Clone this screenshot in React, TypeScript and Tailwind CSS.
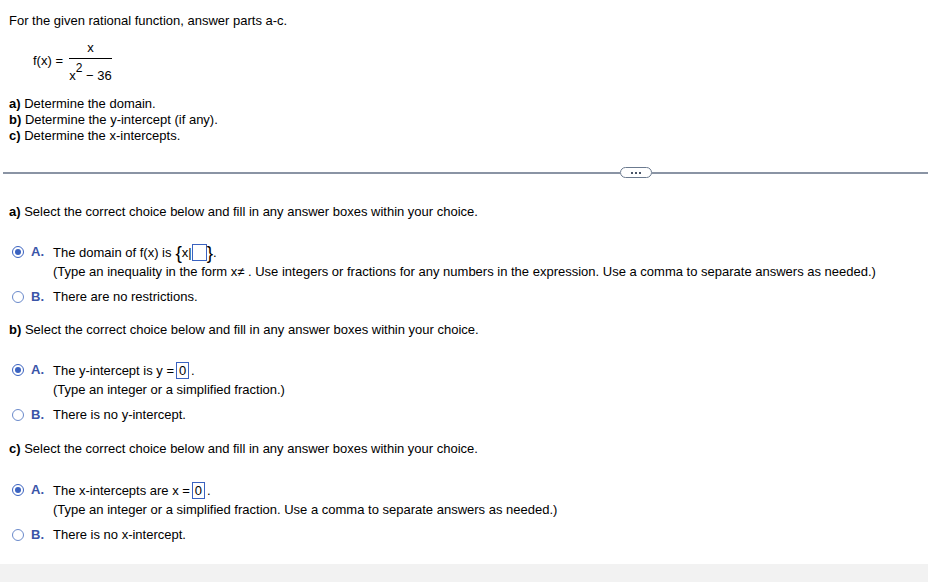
import React from 'react';

const font = { fontFamily: '"Liberation Sans", Arial, sans-serif' };

const Radio: React.FC<{ checked?: boolean }> = ({ checked }) => (
  <span
    className={`mt-[2px] flex h-[12px] w-[12px] shrink-0 items-center justify-center rounded-full border ${
      checked ? 'border-[#3a62c0]' : 'border-[#6a8acb]'
    } bg-white`}
  >
    {checked && <span className="h-[6px] w-[6px] rounded-full bg-[#3a62c0]" />}
  </span>
);

interface ChoiceProps {
  letter: string;
  checked?: boolean;
  children: React.ReactNode;
  hint?: string;
}

const Choice: React.FC<ChoiceProps> = ({ letter, checked, children, hint }) => (
  <div className="flex items-start">
    <div className="ml-[3px] flex w-[41px] items-start gap-[7px]">
      <Radio checked={checked} />
      <span className="font-bold text-[#3b55a8]">{letter}</span>
    </div>
    <div>
      <div className="flex items-center">{children}</div>
      {hint && <div className="mt-[3px]">{hint}</div>}
    </div>
  </div>
);

const AnswerBox: React.FC<{ value?: string }> = ({ value }) => (
  <span className="mx-[2px] inline-flex h-[17px] min-w-[13px] items-center justify-center border border-[#3a62c0] px-[1px] leading-none">
    {value}
  </span>
);

const SectionHeader: React.FC<{ label: string }> = ({ label }) => (
  <div>
    <span className="font-bold">{label}</span> Select the correct choice below and fill in any answer boxes within your choice.
  </div>
);

export default function App() {
  return (
    <div className="flex min-h-[582px] flex-col bg-white text-[13px] leading-4 text-black" style={font}>
      <div className="flex-1">
        <div className="px-[9px] pt-[13px]">For the given rational function, answer parts a-c.</div>

        <div className="mt-[11px] flex items-start pl-[33px]">
          <span className="mt-[13px]">f(x) =</span>
          <div className="ml-[6px] flex flex-col items-center">
            <span className="pb-[2px]">x</span>
            <span className="w-[43px] border-t border-black" />
            <span className="pt-[9px]">
              x<span className="relative -top-[8px] text-[12px]">2</span> − 36
            </span>
          </div>
        </div>

        <div className="mt-[12px] px-[9px]">
          <div><span className="font-bold">a)</span> Determine the domain.</div>
          <div><span className="font-bold">b)</span> Determine the y-intercept (if any).</div>
          <div><span className="font-bold">c)</span> Determine the x-intercepts.</div>
        </div>

        <div className="mt-[23px] flex items-center pl-[3px]">
          <div className="h-[2px] flex-1 bg-[#8a94a4]" />
          <div className="flex h-[11px] w-[32px] items-center justify-center gap-[2px] rounded-full border border-[#6b7a8f] bg-white">
            <span className="h-[2px] w-[2px] bg-[#4a5568]" />
            <span className="h-[2px] w-[2px] bg-[#4a5568]" />
            <span className="h-[2px] w-[2px] bg-[#4a5568]" />
          </div>
          <div className="h-[2px] w-[276px] bg-[#8a94a4]" />
        </div>

        <div className="px-[9px]">
          <div className="mt-[26px]">
            <SectionHeader label="a)" />
          </div>

          <div className="mt-[24px]">
            <Choice
              letter="A."
              checked
              hint="(Type an inequality in the form x≠ . Use integers or fractions for any numbers in the expression. Use a comma to separate answers as needed.)"
            >
              <span>The domain of f(x) is</span>
              <span className="ml-[4px] text-[19px] leading-4">{'{'}</span>
              <span>x|</span>
              <span className="inline-flex h-[17px] w-[15px] border border-[#3a62c0]" />
              <span className="text-[19px] leading-4">{'}'}</span>
              <span>.</span>
            </Choice>
          </div>
          <div className="mt-[9px]">
            <Choice letter="B.">There are no restrictions.</Choice>
          </div>

          <div className="mt-[17px]">
            <SectionHeader label="b)" />
          </div>

          <div className="mt-[24px]">
            <Choice letter="A." checked hint="(Type an integer or a simplified fraction.)">
              <span>The y-intercept is y =</span>
              <AnswerBox value="0" />
              <span>.</span>
            </Choice>
          </div>
          <div className="mt-[9px]">
            <Choice letter="B.">There is no y-intercept.</Choice>
          </div>

          <div className="mt-[18px]">
            <SectionHeader label="c)" />
          </div>

          <div className="mt-[25px]">
            <Choice
              letter="A."
              checked
              hint="(Type an integer or a simplified fraction. Use a comma to separate answers as needed.)"
            >
              <span>The x-intercepts are x =</span>
              <AnswerBox value="0" />
              <span>.</span>
            </Choice>
          </div>
          <div className="mt-[9px]">
            <Choice letter="B.">There is no x-intercept.</Choice>
          </div>
        </div>
      </div>
      <div className="h-[18px] bg-[#f2f2f2]" />
    </div>
  );
}
